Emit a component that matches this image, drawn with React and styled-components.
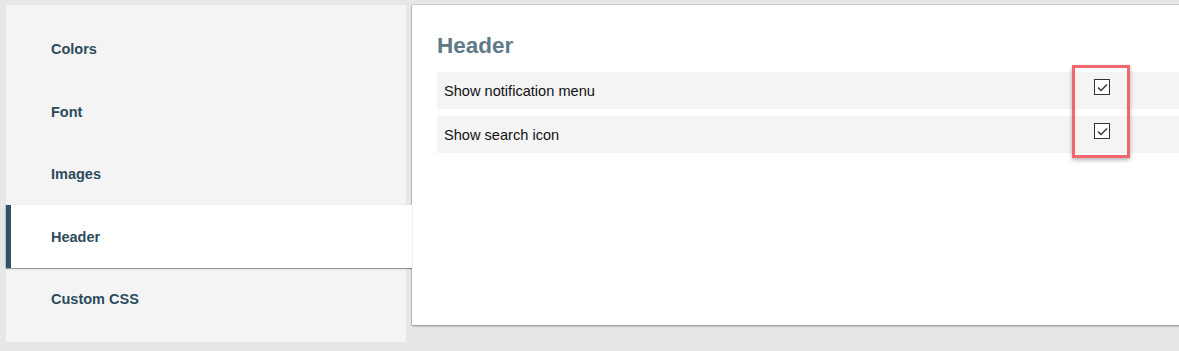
import React from "react";
import styled, { createGlobalStyle } from "styled-components";

const Global = createGlobalStyle`
  html, body { margin: 0; padding: 0; }
  body {
    background: #e6e7e9;
    font-family: "Liberation Sans", Arial, sans-serif;
    overflow: hidden;
  }
`;

const Page = styled.div`
  display: flex;
  align-items: flex-start;
  padding: 5px 0 0 6px;
  width: 1220px;
  height: 351px;
  box-sizing: border-box;
`;

const Sidebar = styled.nav`
  width: 400px;
  flex-shrink: 0;
  height: 337px;
  box-sizing: border-box;
  background: #f4f4f4;
  padding-top: 12.5px;
  display: flex;
  flex-direction: column;
  position: relative;
  z-index: 2;
`;

const NavItem = styled.div`
  height: 62.5px;
  box-sizing: border-box;
  display: flex;
  align-items: center;
  padding-left: ${(p) => (p.$active ? "40px" : "45px")};
  padding-top: 1px;
  font-size: 14.5px;
  font-weight: bold;
  color: #2c4b5c;
  background: ${(p) => (p.$active ? "#ffffff" : "transparent")};
  border-left: ${(p) => (p.$active ? "5px solid #2c5464" : "none")};
  margin-right: ${(p) => (p.$active ? "-6px" : "0")};
  box-shadow: ${(p) => (p.$active ? "0 1px 1px rgba(0,0,0,0.35), -1px 0 1px rgba(0,0,0,0.12)" : "none")};
`;

const Panel = styled.main`
  margin-left: 6px;
  width: 790px;
  height: 320px;
  flex-shrink: 0;
  box-sizing: border-box;
  background: #ffffff;
  box-shadow: 0 0 1px rgba(0,0,0,0.55), 0 1px 2px rgba(0,0,0,0.35);
  padding: 27px 0 0 25px;
  position: relative;
  z-index: 1;
`;

const Title = styled.h2`
  margin: 0 0 13px;
  font-size: 22.5px;
  line-height: 27px;
  font-weight: bold;
  color: #5e7a88;
`;

const Rows = styled.div`
  display: flex;
  flex-direction: column;
  gap: 7px;
`;

const Row = styled.div`
  display: grid;
  grid-template-columns: 650px 16px 1fr;
  height: 37px;
  background: #f4f4f4;
  padding-left: 7px;
`;

const Label = styled.span`
  align-self: center;
  font-size: 14.6px;
  color: #111;
`;

const Check = styled.span`
  margin-top: 7px;
  width: 16px;
  height: 16px;
  box-sizing: border-box;
  border: 1.5px solid #333;
  background: #fff;
  display: flex;
  align-items: center;
  justify-content: center;
`;

const Highlight = styled.div`
  position: absolute;
  left: 660px;
  top: 60px;
  width: 58px;
  height: 93px;
  box-sizing: border-box;
  border: 3px solid #f1676d;
  box-shadow: 0 2px 4px rgba(0,0,0,0.3);
  pointer-events: none;
`;

const CheckMark = () => (
  <svg width="11" height="9" viewBox="0 0 11 9">
    <path d="M1 4.5 L4 7.5 L10 1.5" fill="none" stroke="#333" strokeWidth="1.4" />
  </svg>
);

const nav = ["Colors", "Font", "Images", "Header", "Custom CSS"];
const options = ["Show notification menu", "Show search icon"];

export default function App() {
  return (
    <>
      <Global />
      <Page>
        <Sidebar>
          {nav.map((n) => (
            <NavItem key={n} $active={n === "Header"}>
              {n}
            </NavItem>
          ))}
        </Sidebar>
        <Panel>
          <Title>Header</Title>
          <Rows>
            {options.map((o) => (
              <Row key={o}>
                <Label>{o}</Label>
                <Check>
                  <CheckMark />
                </Check>
              </Row>
            ))}
          </Rows>
          <Highlight />
        </Panel>
      </Page>
    </>
  );
}
